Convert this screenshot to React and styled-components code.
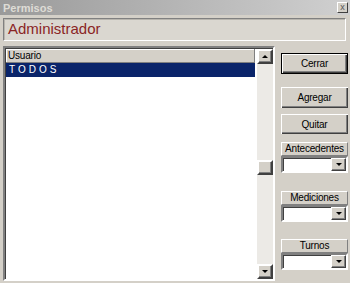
import React from 'react'
import styled, { createGlobalStyle } from 'styled-components'

const Global = createGlobalStyle`
  html, body { margin: 0; padding: 0; background: #d4d0c8; }
  body { font-family: "Liberation Sans", Arial, sans-serif; font-size: 10px; color: #000; }
`

const combos = [
  { label: 'Antecedentes', top: 8 },
  { label: 'Mediciones', top: 18 },
  { label: 'Turnos', top: 17 },
]

const App = () => {
  return (
    <Window>
      <Global />
      <TitleBar>
        <Title>Permisos</Title>
        <CloseBtn>x</CloseBtn>
      </TitleBar>
      <HeaderFrame>Administrador</HeaderFrame>
      <Main>
        <ListBox>
          <ListArea>
            <ColHeader>Usuario</ColHeader>
            <Row selected>TODOS</Row>
          </ListArea>
          <ScrollBar>
            <ArrowBtn><Tri up /></ArrowBtn>
            <Track>
              <Thumb />
            </Track>
            <ArrowBtn><Tri /></ArrowBtn>
          </ScrollBar>
        </ListBox>
        <Side>
          <Button $default>Cerrar</Button>
          <Button $top={13}>Agregar</Button>
          <Button $top={6} $h={20}>Quitar</Button>
          {combos.map(c => (
            <Group key={c.label} $top={c.top}>
              <GroupLabel>{c.label}</GroupLabel>
              <Combo>
                <ComboBtn><Tri /></ComboBtn>
              </Combo>
            </Group>
          ))}
        </Side>
      </Main>
    </Window>
  )
}

export default App

const Window = styled.div`
  width: 350px;
  height: 283px;
  background: #d4d0c8;
  display: flex;
  flex-direction: column;
  overflow: hidden;
`
const TitleBar = styled.div`
  height: 15px;
  background: linear-gradient(90deg, #9a9a9a, #d0d0d0);
  display: flex;
  align-items: center;
  justify-content: space-between;
  padding: 0 2px 0 3px;
`
const Title = styled.span`
  color: #dedcd6;
  font-weight: bold;
  font-size: 11px;
`
const CloseBtn = styled.div`
  width: 9px;
  height: 9px;
  background: #d4d0c8;
  border: 1px solid;
  border-color: #fff #404040 #404040 #fff;
  font-size: 9px;
  line-height: 8px;
  text-align: center;
  color: #555;
`
const HeaderFrame = styled.div`
  margin: 3px 4px 0 3px;
  height: 21px;
  border: 1px solid;
  border-color: #808080 #fff #fff #808080;
  box-shadow: inset 1px 1px 0 #b8b5ae;
  background: #dad7d0;
  color: #8a2525;
  font-size: 15px;
  line-height: 20px;
  padding-left: 4px;
`
const Main = styled.div`
  display: flex;
  margin-top: 5px;
  padding-left: 3px;
  gap: 6px;
`
const ListBox = styled.div`
  width: 268px;
  height: 231px;
  border: 2px solid;
  border-color: #808080 #fff #fff #808080;
  box-shadow: inset 1px 1px 0 #404040;
  background: #fff;
  display: flex;
`
const ListArea = styled.div`
  flex: 1;
  padding: 1px 0 0 1px;
  display: flex;
  flex-direction: column;
`
const ColHeader = styled.div`
  height: 13px;
  background: #d4d0c8;
  border-right: 1px solid #808080;
  border-bottom: 1px solid #808080;
  box-shadow: inset 1px 1px 0 #fff;
  margin-right: 2px;
  padding-left: 2px;
  line-height: 13px;
  letter-spacing: -0.2px;
`
const Row = styled.div`
  height: 14px;
  line-height: 14px;
  margin-right: 2px;
  background: ${p => (p.selected ? '#0a246a' : '#fff')};
  color: ${p => (p.selected ? '#fff' : '#000')};
  letter-spacing: 3px;
  padding-left: 3px;
`
const ScrollBar = styled.div`
  width: 16px;
  display: flex;
  flex-direction: column;
  padding-top: 1px;
`
const ArrowBtn = styled.div`
  width: 12px;
  height: 11px;
  background: #d4d0c8;
  border: 2px solid;
  border-color: #fff #404040 #404040 #fff;
  box-shadow: inset -1px -1px 0 #808080;
  display: flex;
  align-items: center;
  justify-content: center;
`
const Track = styled.div`
  flex: 1;
  background: #eceae6;
  padding-top: 96px;
`
const Thumb = styled.div`
  width: 12px;
  height: 11px;
  background: #d4d0c8;
  border: 2px solid;
  border-color: #fff #404040 #404040 #fff;
  box-shadow: inset -1px -1px 0 #808080;
`
const Tri = styled.div`
  width: 0;
  height: 0;
  border-left: 3px solid transparent;
  border-right: 3px solid transparent;
  ${p => (p.up ? 'border-bottom: 3px solid #000;' : 'border-top: 3px solid #000;')}
`
const Side = styled.div`
  width: 67px;
  display: flex;
  flex-direction: column;
  padding-top: 7px;
`
const Button = styled.div`
  margin-top: ${p => p.$top || 0}px;
  height: ${p => (p.$h || 21) - 4}px;
  background: #d4d0c8;
  border: ${p => (p.$default ? '1px solid #000' : 'none')};
  box-shadow: inset 1px 1px 0 #fff, inset -1px -1px 0 #404040, inset -2px -2px 0 #808080;
  padding: ${p => (p.$default ? '1px' : '2px')};
  display: flex;
  align-items: center;
  justify-content: center;
  letter-spacing: -0.2px;
`
const Group = styled.div`
  margin-top: ${p => p.$top}px;
  display: flex;
  flex-direction: column;
`
const GroupLabel = styled.div`
  height: 12px;
  background: #d4d0c8;
  border: 1px solid;
  border-color: #fff #808080 #808080 #fff;
  text-align: center;
  line-height: 12px;
  letter-spacing: -0.2px;
  white-space: nowrap;
`
const Combo = styled.div`
  height: 13px;
  background: #fff;
  border: 2px solid;
  border-color: #808080 #fff #fff #808080;
  box-shadow: inset 1px 1px 0 #404040;
  display: flex;
  justify-content: flex-end;
`
const ComboBtn = styled.div`
  width: 13px;
  height: 11px;
  background: #d4d0c8;
  border: 1px solid;
  border-color: #fff #404040 #404040 #fff;
  box-shadow: inset -1px -1px 0 #808080;
  display: flex;
  align-items: center;
  justify-content: center;
`
